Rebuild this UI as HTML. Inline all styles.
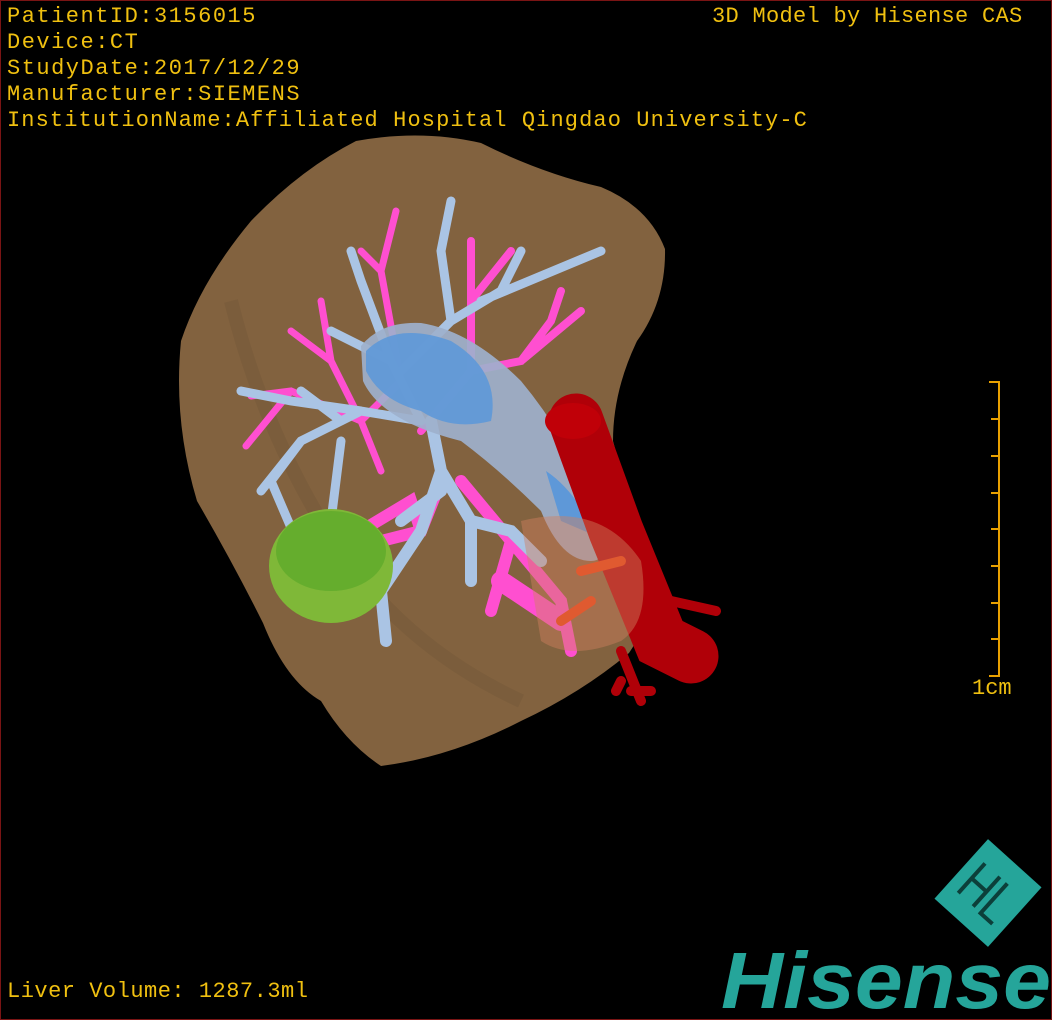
<!DOCTYPE html>
<html><head><meta charset="utf-8"><style>
html,body{margin:0;padding:0;background:#000;}
#w{position:relative;width:1050px;height:1018px;border:1px solid #7a1414;background:#000;overflow:hidden;}
.t{position:absolute;color:#f0c010;font-family:"Liberation Mono",monospace;font-size:22px;letter-spacing:1.5px;white-space:pre;line-height:26px;}
</style></head><body><div id="w">
<svg width="1050" height="1018" style="position:absolute;left:0;top:0">
<path d="M355,140 Q420,128 480,142 Q540,172 600,186 Q648,206 664,248 Q665,300 636,340 Q612,390 612,440 Q628,500 648,560 Q652,618 628,652 Q580,692 520,720 Q450,756 380,765 Q345,742 320,700 Q285,680 262,622 Q232,562 196,500 Q172,420 180,340 Q200,280 250,220 Q300,168 355,140Z" fill="#82623f"/>
<path d="M230,300 Q260,420 320,520 Q390,640 520,700" stroke="#6e5236" stroke-width="14" fill="none" opacity=".3"/>
<g stroke="#ff4fd0" stroke-linecap="round" fill="none">
<path d="M380,470 L360,420 L330,360 L320,300 M330,360 L290,330 M360,420 L290,390 L250,395 M290,390 L245,445 M360,420 L400,380 L380,270 L395,210 M380,270 L360,250" stroke-width="7"/>
<path d="M420,430 L470,370 L470,300 L470,240 M470,300 L510,250 M470,370 L520,360 L550,320 L560,290 M520,360 L580,310" stroke-width="8"/>
<path d="M440,480 L420,530 L380,540 L370,600 M420,530 L410,500 L360,530 L290,550 M380,540 L310,560 M460,480 L510,540 L560,600 L570,650 M510,540 L490,610" stroke-width="12"/>
<path d="M500,580 L560,620" stroke-width="20"/>
</g>
<g stroke="#aac4e4" stroke-linecap="round" fill="none">
<path d="M420,420 L360,410 L300,440 L260,490 M360,410 L290,400 L240,390 M340,420 L300,390 M300,440 L270,480 L300,550 M340,440 L330,520 L310,540" stroke-width="9"/>
<path d="M420,420 L390,360 L360,280 L350,250 M390,360 L330,330 M400,370 L450,320 L500,290 L520,250 M450,320 L440,250 L450,200 M480,300 L600,250" stroke-width="9"/>
<path d="M430,420 L440,470 L420,530 L380,590 L385,640 M440,470 L470,520 L470,580 M470,520 L510,530 L540,560 M440,490 L400,520" stroke-width="12"/>
</g>
<ellipse cx="330" cy="565" rx="62" ry="57" fill="#7fb838"/>
<ellipse cx="330" cy="550" rx="55" ry="40" fill="#5aa82a" opacity=".7"/>
<path d="M360,345 Q380,320 420,322 Q470,330 520,380 Q570,440 600,520 Q610,560 590,560 Q560,560 540,510 Q500,470 460,440 Q380,420 362,380Z" fill="#9eb0cc" opacity=".92"/>
<path d="M365,350 Q395,320 450,340 Q500,370 490,420 Q450,430 420,410 Q380,400 365,370Z" fill="#5e98d8" opacity=".9"/>
<path d="M545,470 Q575,490 595,535 L560,520Z" fill="#5e98d8"/>
<g stroke="#b00008" stroke-linecap="round" fill="none">
<path d="M575,420 L615,530 L660,640 L690,655" stroke-width="55"/>
<path d="M670,600 L715,610 M620,650 L640,700 M630,690 L650,690 M620,680 L615,690" stroke-width="10"/>
</g>
<ellipse cx="572" cy="420" rx="28" ry="18" fill="#c00008"/>
<path d="M520,520 Q600,500 640,560 Q650,620 620,640 Q570,660 540,640Z" fill="#d08060" opacity=".45"/>
<path d="M580,570 L620,560 M590,600 L560,620" stroke="#e05a30" stroke-width="10" stroke-linecap="round"/>
<g stroke="#e8a000" stroke-width="2">
<line x1="998" y1="381" x2="998" y2="675"/>
<line x1="988" y1="381" x2="999" y2="381"/><line x1="990" y1="418" x2="999" y2="418"/><line x1="990" y1="455" x2="999" y2="455"/><line x1="990" y1="492" x2="999" y2="492"/><line x1="990" y1="528" x2="999" y2="528"/><line x1="990" y1="565" x2="999" y2="565"/><line x1="990" y1="602" x2="999" y2="602"/><line x1="990" y1="638" x2="999" y2="638"/><line x1="988" y1="675" x2="999" y2="675"/>
</g>
<g transform="translate(987,892) rotate(42)">
<rect x="-36" y="-40" width="72" height="80" fill="#25a59a"/>
<path d="M-22,-20 L-22,20 M-22,0 L-2,0 M-2,-20 L-2,20 M8,-20 L8,20 L24,20" stroke="#0c3f3a" stroke-width="4" fill="none"/>
</g>
<text x="720" y="1007" font-family="Liberation Sans,sans-serif" font-size="80" font-weight="bold" font-style="italic" fill="#25a59a" textLength="330" lengthAdjust="spacingAndGlyphs">Hisense</text>
</svg>
<div class="t" style="left:6px;top:3px">PatientID:3156015
Device:CT
StudyDate:2017/12/29
Manufacturer:SIEMENS
<span style="letter-spacing:1.1px">InstitutionName:Affiliated Hospital Qingdao University-C</span></div>
<div class="t" style="left:711px;top:3px;letter-spacing:0.3px">3D Model by Hisense CAS</div>
<div class="t" style="left:6px;top:978px;letter-spacing:0.5px">Liver Volume: 1287.3ml</div>
<div class="t" style="left:971px;top:675px;letter-spacing:0">1cm</div>
</div></body></html>
